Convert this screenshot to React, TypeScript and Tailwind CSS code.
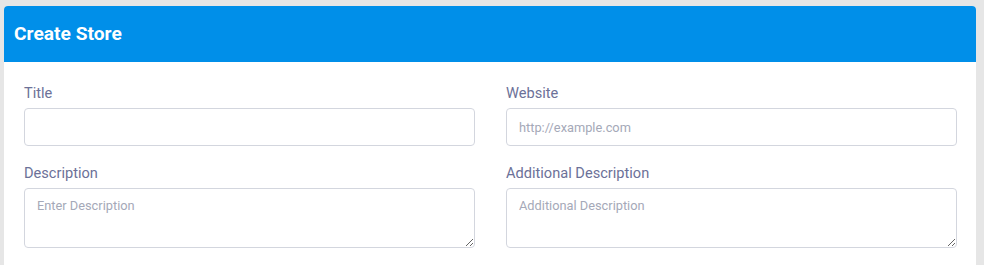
import React from "react";

const font = { fontFamily: "Roboto, 'Noto Sans', sans-serif" };

function Field({ label, children }: { label: string; children: React.ReactNode }) {
  return (
    <label className="block">
      <span className="mb-[5px] block text-[14.6px] leading-5 text-[#6c7198]">{label}</span>
      {children}
    </label>
  );
}

const inputCls =
  "block h-[38px] w-full rounded-[4px] border border-[#d3d6de] bg-white px-3 text-[12.8px] text-[#495057] outline-none placeholder:text-[#a5a9b8]";
const areaCls =
  "block h-[60px] w-full rounded-[4px] border border-[#d3d6de] bg-white px-3 pt-[7px] text-[12.8px] text-[#495057] outline-none placeholder:text-[#a5a9b8]";

export default function App() {
  return (
    <div className="min-h-[265px] bg-[#e6e6e6] pt-[6px] pl-[4px] pr-[8px]" style={font}>
      <div className="overflow-hidden rounded-t-[4px] bg-white">
        <div className="flex h-[56px] items-center bg-[#008fe9] px-[10px]">
          <h1 className="text-[19.2px] font-bold text-white">Create Store</h1>
        </div>
        <div className="grid grid-cols-2 gap-x-[31px] gap-y-[17px] pl-5 pr-[19px] pt-[21px] pb-5">
          <Field label="Title">
            <input className={inputCls} />
          </Field>
          <Field label="Website">
            <input className={inputCls} placeholder="http://example.com" />
          </Field>
          <Field label="Description">
            <textarea className={areaCls} placeholder="Enter Description" />
          </Field>
          <Field label="Additional Description">
            <textarea className={areaCls} placeholder="Additional Description" />
          </Field>
        </div>
      </div>
    </div>
  );
}
